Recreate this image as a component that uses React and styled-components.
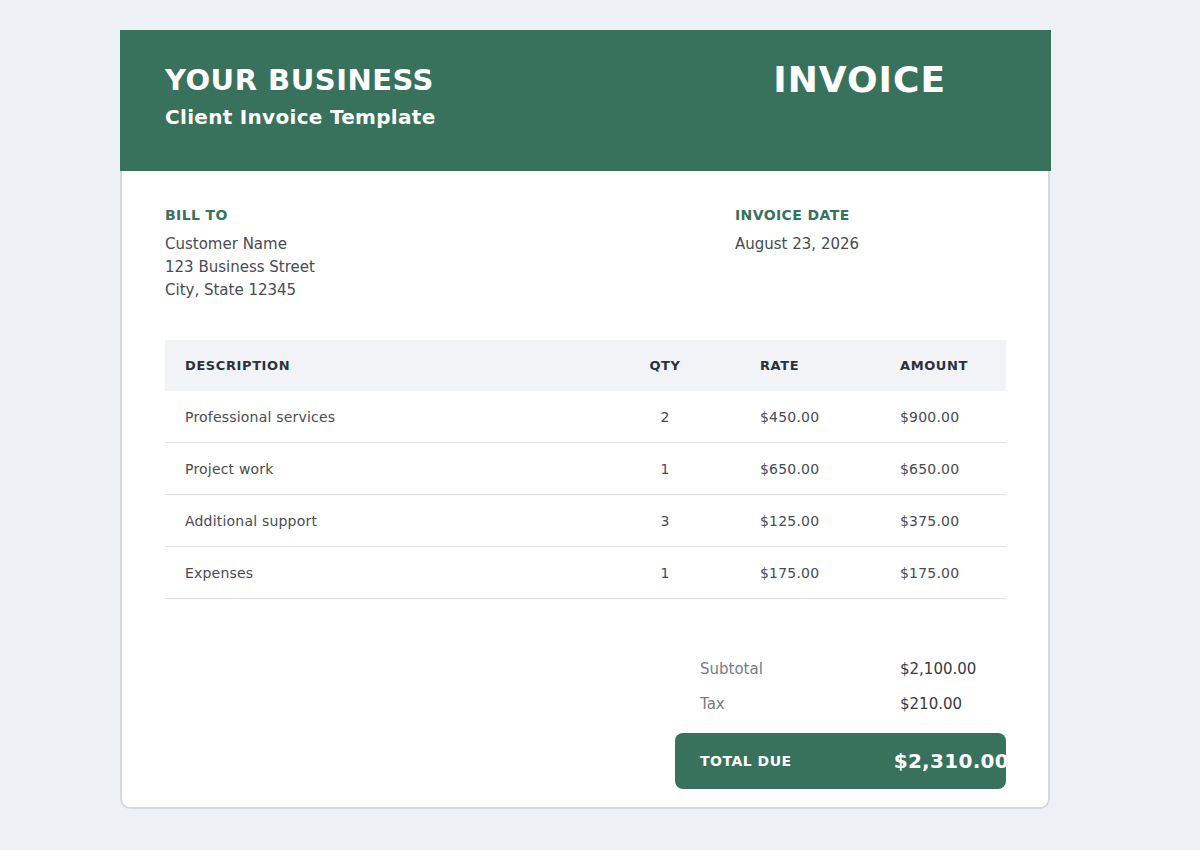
import React from "react";
import styled, { createGlobalStyle } from "styled-components";

const Global = createGlobalStyle`
  body { margin: 0; background: #edf1f6; font-family: "DejaVu Sans", sans-serif; }
`;
const GREEN = "#38725c";

const Page = styled.div`padding: 30px 0 0 120px;`;
const Card = styled.div`
  width: 926px; background: #fff; border: 2px solid #d6d9de; border-top: none;
  border-radius: 0 0 10px 10px; padding-bottom: 18px;
`;
const Header = styled.header`
  background: ${GREEN}; height: 141px; width: 931px; margin-left: -2px; box-sizing: border-box;
  display: flex; justify-content: space-between; padding: 32px 105px 0 45px; color: #fff;
`;
const Brand = styled.h1`margin: 0; font-size: 29px; font-weight: bold; letter-spacing: 0.5px; line-height: 36px;`;
const Sub = styled.div`font-size: 20px; font-weight: bold; margin-top: 7px; letter-spacing: 0.3px;`;
const Title = styled.div`font-size: 36px; font-weight: bold; line-height: 36px; letter-spacing: 1px;`;
const Body = styled.div`padding: 36px 43px 0 43px;`;
const Info = styled.div`display: flex;`;
const InfoCol = styled.div`width: ${p => p.$w}px;`;
const Label = styled.div`color: ${GREEN}; font-weight: bold; font-size: 14px; letter-spacing: 0.4px; margin-bottom: 10px;`;
const Line = styled.div`color: #474b53; font-size: 15px; line-height: 23px;`;
const Table = styled.div`margin-top: 38px; width: 841px;`;
const Row = styled.div`
  display: grid; grid-template-columns: 435px 130px 140px 136px; align-items: center;
  height: ${p => (p.$head ? 51 : 52)}px; background: ${p => (p.$head ? "#f1f3f7" : "transparent")};
  border-bottom: ${p => (p.$head ? "none" : "1px solid #e0e2e6")};
  font-size: ${p => (p.$head ? 13 : 14)}px; font-weight: ${p => (p.$head ? "bold" : "normal")};
  color: ${p => (p.$head ? "#2b313c" : "#474b53")}; letter-spacing: ${p => (p.$head ? 0.6 : 0.2)}px;
  box-sizing: border-box;
`;
const Cell = styled.div`padding-left: ${p => (p.$center ? 0 : p.$pl)}px; text-align: ${p => (p.$center ? "center" : "left")};`;
const Totals = styled.div`margin: 52px 0 0 510px; width: 331px;`;
const TRow = styled.div`display: grid; grid-template-columns: 200px 1fr; padding-left: 25px; height: 35px; align-items: center; font-size: 15px;`;
const TLabel = styled.span`color: #777b83;`;
const TVal = styled.span`color: #363a42;`;
const Due = styled.div`
  margin-top: 12px; height: 56px; background: ${GREEN}; border-radius: 8px; color: #fff;
  display: flex; align-items: center; justify-content: space-between; padding: 0 0 0 25px; white-space: nowrap;
`;
const DueLabel = styled.span`font-size: 14px; font-weight: bold; letter-spacing: 0.5px;`;
const DueVal = styled.span`font-size: 20px; font-weight: bold; margin-right: -3px; letter-spacing: 0.3px;`;

const items = [
  ["Professional services", 2, "$450.00", "$900.00"],
  ["Project work", 1, "$650.00", "$650.00"],
  ["Additional support", 3, "$125.00", "$375.00"],
  ["Expenses", 1, "$175.00", "$175.00"],
];

export default function App() {
  return (
    <Page>
      <Global />
      <Card>
        <Header>
          <div>
            <Brand>YOUR BUSINESS</Brand>
            <Sub>Client Invoice Template</Sub>
          </div>
          <Title>INVOICE</Title>
        </Header>
        <Body>
          <Info>
            <InfoCol $w={570}>
              <Label>BILL TO</Label>
              <Line>Customer Name</Line>
              <Line>123 Business Street</Line>
              <Line>City, State 12345</Line>
            </InfoCol>
            <InfoCol $w={270}>
              <Label>INVOICE DATE</Label>
              <Line>August 23, 2026</Line>
            </InfoCol>
          </Info>
          <Table>
            <Row $head>
              <Cell $pl={20}>DESCRIPTION</Cell>
              <Cell $center>QTY</Cell>
              <Cell $pl={30}>RATE</Cell>
              <Cell $pl={30}>AMOUNT</Cell>
            </Row>
            {items.map(([d, q, r, a]) => (
              <Row key={d}>
                <Cell $pl={20}>{d}</Cell>
                <Cell $center>{q}</Cell>
                <Cell $pl={30}>{r}</Cell>
                <Cell $pl={30}>{a}</Cell>
              </Row>
            ))}
          </Table>
          <Totals>
            <TRow><TLabel>Subtotal</TLabel><TVal>$2,100.00</TVal></TRow>
            <TRow><TLabel>Tax</TLabel><TVal>$210.00</TVal></TRow>
            <Due><DueLabel>TOTAL DUE</DueLabel><DueVal>$2,310.00</DueVal></Due>
          </Totals>
        </Body>
      </Card>
    </Page>
  );
}
